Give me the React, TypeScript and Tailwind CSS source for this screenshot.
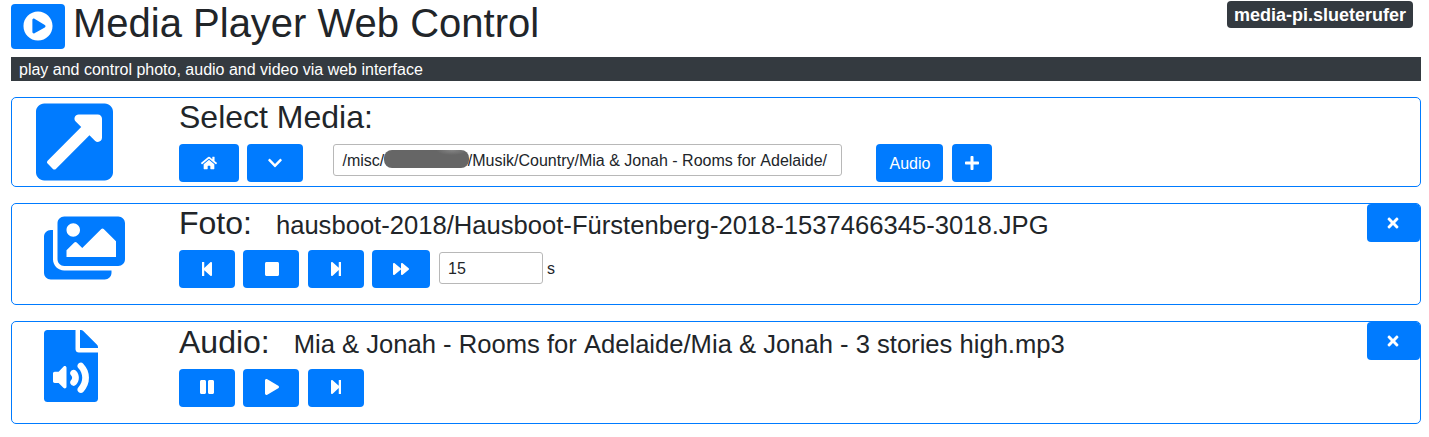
import type { ReactNode } from "react";
import type { IconType } from "react-icons";
import {
  FaPlayCircle,
  FaExternalLinkSquareAlt,
  FaHome,
  FaChevronDown,
  FaPlus,
  FaImages,
  FaStepBackward,
  FaStop,
  FaStepForward,
  FaForward,
  FaTimes,
  FaFileAudio,
  FaPause,
  FaPlay,
} from "react-icons/fa";

function Button({ icon: Icon, label, className }: { icon: IconType; label: string; className: string }) {
  return (
    <button
      aria-label={label}
      className={`flex h-[38px] shrink-0 items-center justify-center rounded bg-[#007bff] text-white ${className}`}
    >
      <Icon className="h-4 w-auto shrink-0" />
    </button>
  );
}

function Panel({ icon, className, closable, children }: { icon: ReactNode; className: string; closable?: boolean; children: ReactNode }) {
  return (
    <section className={`flex rounded-[5px] border border-[#007bff] ${className}`}>
      <div className="w-[167px] shrink-0 text-[#007bff]">{icon}</div>
      <div className="min-w-0 flex-1">{children}</div>
      {closable && <Button icon={FaTimes} label="Close" className="w-[53px] pr-px" />}
    </section>
  );
}

export default function App() {
  return (
    <main className="h-[437px] overflow-hidden bg-white pr-2 pl-[11px] font-['Liberation_Sans',Arial,sans-serif] text-base text-[#212529]">
      <header className="flex h-[57px] items-start">
        <button aria-label="Play" className="mt-1 flex h-[45px] w-[54px] items-start justify-center rounded bg-[#007bff] pt-[7px] text-white">
          <FaPlayCircle className="size-[30px]" />
        </button>
        <h1 className="ml-2 flex-1 pt-px text-[40px] leading-[44px]">Media Player Web Control</h1>
        <span className="mt-px mr-2 h-[27px] w-[186px] rounded bg-[#343a40] text-center text-[18px] leading-[29px] font-bold text-white">
          media-pi.slueterufer
        </span>
      </header>
      <p className="h-6 bg-[#343a40] px-2 leading-[26px] text-white">play and control photo, audio and video via web interface</p>

      <Panel className="mt-4 h-[90px]" icon={<FaExternalLinkSquareAlt className="ml-6 h-[88px] w-[77px]" />}>
        <h2 className="h-[46px] text-[32px] leading-[38px]">Select Media:</h2>
        <div className="flex items-start">
          <Button icon={FaHome} label="Home" className="w-[60px]" />
          <Button icon={FaChevronDown} label="Expand" className="ml-2 w-14" />
          <div className="ml-[30px] flex h-8 w-[509px] items-start rounded-[3px] border border-[#b8b8b8] pl-[8.5px] leading-8 whitespace-pre [font-kerning:none]">
            <span>/misc/</span>
            <span className="mt-[5px] -ml-[0.5px] h-[18px] w-[85px] shrink-0 rounded-[8px] bg-[#666] bg-[radial-gradient(ellipse_16px_5px_at_68px_0px,#858585,#666)]" />
            <span className="-ml-px">/Musik/Country/Mia &amp; Jonah - Rooms for Adelaide/</span>
          </div>
          <button className="ml-[34px] h-[38px] w-[67px] rounded bg-[#007bff] pt-px pl-px leading-6 text-white">Audio</button>
          <Button icon={FaPlus} label="Add" className="ml-[9px] w-10 pr-px" />
        </div>
      </Panel>

      <Panel closable className="mt-4 h-[102px]" icon={<FaImages className="mt-2 ml-8 h-[72px] w-[81px]" />}>
        <div className="flex h-[46px] items-baseline">
          <h2 className="text-[32px] leading-[38px]">Foto:</h2>
          <span className="ml-6 text-[25.6px]">hausboot-2018/Hausboot-Fürstenberg-2018-1537466345-3018.JPG</span>
        </div>
        <div className="flex items-start">
          <Button icon={FaStepBackward} label="Previous" className="w-14" />
          <Button icon={FaStop} label="Stop" className="ml-2 w-14 pl-px" />
          <Button icon={FaStepForward} label="Next" className="ml-[9px] w-14" />
          <Button icon={FaForward} label="Forward" className="ml-2 w-[58px]" />
          <div className="mt-0.5 ml-[9px] h-8 w-[104px] rounded-[3px] border border-[#b8b8b8] pl-2 leading-8">15</div>
          <span className="mt-[7px] ml-1 leading-6">s</span>
        </div>
      </Panel>

      <Panel closable className="mt-4 h-[103px]" icon={<FaFileAudio className="mt-2 ml-8 h-[72px] w-[54px]" />}>
        <div className="flex h-[47px] items-baseline">
          <h2 className="text-[32px] leading-[40px]">Audio:</h2>
          <span className="ml-6 text-[25.6px] [font-kerning:none]">Mia &amp; Jonah - Rooms for Adelaide/Mia &amp; Jonah - 3 stories high.mp3</span>
        </div>
        <div className="flex items-start">
          <Button icon={FaPause} label="Pause" className="w-14 pb-0.5" />
          <Button icon={FaPlay} label="Play" className="ml-2 w-14 pb-0.5 pl-px" />
          <Button icon={FaStepForward} label="Next" className="ml-[9px] w-14 pb-0.5" />
        </div>
      </Panel>
    </main>
  );
}
